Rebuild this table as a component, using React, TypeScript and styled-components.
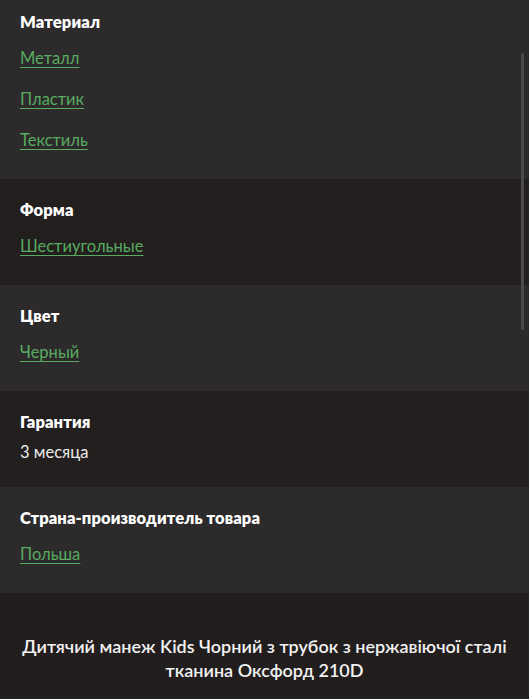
import React from "react";
import styled, { createGlobalStyle } from "styled-components";

const Global = createGlobalStyle`
  html, body { margin: 0; padding: 0; background: #221e1e; }
  body { font-family: Lato, "Noto Sans", sans-serif; -webkit-font-smoothing: antialiased; }
  #root { min-height: 100vh; }
`;

const Page = styled.div`
  position: relative;
  width: 529px;
  height: 699px;
  overflow: hidden;
  background: #221e1e;
`;

const List = styled.div`
  display: flex;
  flex-direction: column;
  margin-top: -9px;
`;

const Row = styled.section<{ $alt: boolean }>`
  background: ${(p) => (p.$alt ? "#231f1f" : "#2c2a2b")};
  padding: 20px 20px 24px;
  display: flex;
  flex-direction: column;
`;

const Title = styled.div`
  font-size: 16.5px;
  line-height: 22px;
  font-weight: 800;
  color: #ffffff;
  letter-spacing: 0.1px;
`;

const Links = styled.div`
  display: flex;
  flex-direction: column;
  align-items: flex-start;
  gap: 10px;
  margin-top: 9px;
`;

const Link = styled.a`
  display: block;
  padding: 5px 0 4px;
  font-size: 16.5px;
  line-height: 22px;
  color: #58ab60;
  text-decoration: underline;
  text-underline-offset: 3px;
  text-decoration-thickness: 1px;
  cursor: pointer;
`;

const Value = styled.div`
  margin-top: 8px;
  font-size: 16.5px;
  line-height: 22px;
  color: #ececec;
`;

const Footer = styled.footer`
  background: #221e1e;
  padding: 41px 16px 30px;
  text-align: center;
  font-size: 18px;
  line-height: 24px;
  font-weight: 600;
  color: #f2f2f2;
`;

const Scrollbar = styled.div`
  position: absolute;
  right: 5px;
  top: 53px;
  width: 3px;
  height: 277px;
  border-radius: 2px;
  background: #4a4a4a;
`;

type Spec = { title: string; links?: string[]; value?: string };

const specs: Spec[] = [
  { title: "Материал", links: ["Металл", "Пластик", "Текстиль"] },
  { title: "Форма", links: ["Шестиугольные"] },
  { title: "Цвет", links: ["Черный"] },
  { title: "Гарантия", value: "3 месяца" },
  { title: "Страна-производитель товара", links: ["Польша"] },
];

export default function App() {
  return (
    <Page>
      <Global />
      <List>
        {specs.map((s, i) => (
          <Row key={s.title} $alt={i % 2 === 1}>
            <Title>{s.title}</Title>
            {s.links ? (
              <Links>
                {s.links.map((l) => (
                  <Link key={l}>{l}</Link>
                ))}
              </Links>
            ) : (
              <Value>{s.value}</Value>
            )}
          </Row>
        ))}
        <Footer>
          Дитячий манеж Kids Чорний з трубок з нержавіючої сталі
          <br />
          тканина Оксфорд 210D
        </Footer>
      </List>
      <Scrollbar />
    </Page>
  );
}
